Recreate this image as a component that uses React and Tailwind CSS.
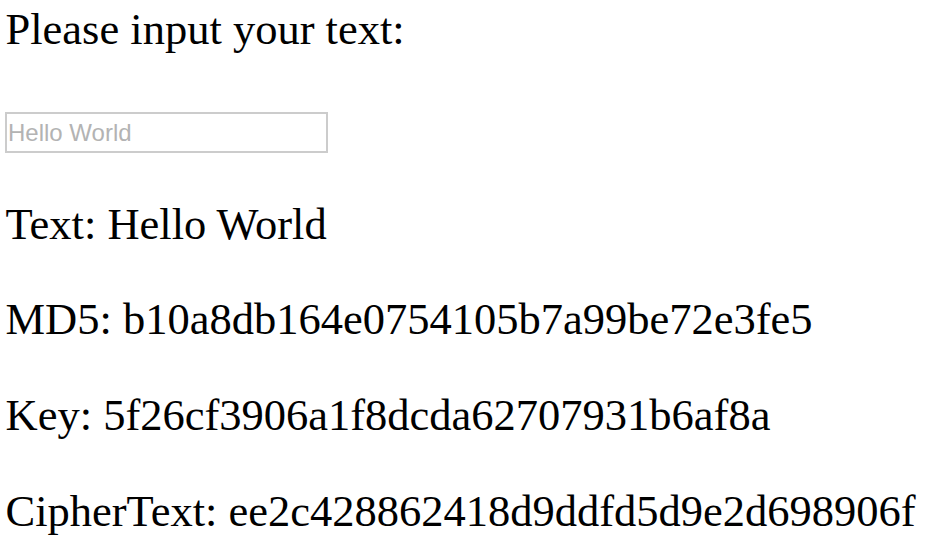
export default function App() {
  const serif = { fontFamily: '"Liberation Serif", "Times New Roman", serif' };
  return (
    <div className="w-[945px] h-[553px] bg-white overflow-hidden text-black" style={serif}>
      <div className="flex flex-col items-start pl-[5.5px] pt-[3.5px] text-[44.5px] leading-[51px]">
        <div>Please input your text:</div>
        <input
          type="text"
          placeholder="Hello World"
          className="mt-[57.5px] -ml-[0.5px] w-[323px] h-[41px] border-2 border-[#cccccc] bg-white px-[1px] text-[24px] text-black outline-none placeholder:text-[#b3b3b3]"
          style={{ fontFamily: '"Liberation Sans", Arial, sans-serif' }}
        />
        <div className="mt-[45.5px]">Text: Hello World</div>
        <div className="mt-[44.7px]">MD5: b10a8db164e0754105b7a99be72e3fe5</div>
        <div className="mt-[44.7px]">Key: 5f26cf3906a1f8dcda62707931b6af8a</div>
        <div className="mt-[44.7px]">CipherText: ee2c428862418d9ddfd5d9e2d698906f</div>
      </div>
    </div>
  );
}
